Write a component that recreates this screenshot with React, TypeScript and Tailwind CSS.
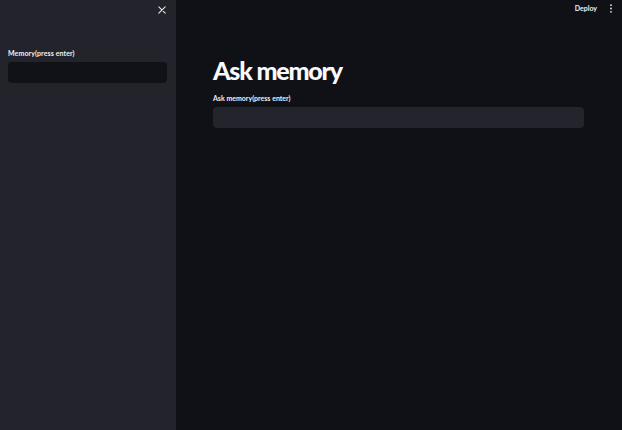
import React from "react";

export default function App() {
  return (
    <div className="flex h-[430px] w-[622px] overflow-hidden bg-[#0f1117] text-[#fafafa]" style={{ fontFamily: "Lato, 'Noto Sans', sans-serif" }}>
      <aside className="flex w-[176px] shrink-0 flex-col bg-[#22232b] px-[8px]">
        <div className="flex h-[14px] items-end justify-end pr-[1px]">
          <svg width="8" height="8" viewBox="0 0 10 10" className="mr-[1px]">
            <path d="M1 1 L9 9 M9 1 L1 9" stroke="#e6e6e6" strokeWidth="1.4" strokeLinecap="round" />
          </svg>
        </div>
        <label className="mt-[34px] text-[7px] font-bold leading-[10px] tracking-[0.1px] text-[#f0f0f0]">Memory(press enter)</label>
        <div className="mt-[4px] h-[21px] w-[159px] rounded-[4px] bg-[#111217]" />
      </aside>
      <main className="flex flex-1 flex-col">
        <div className="flex h-[17px] items-center justify-end gap-[12px] pr-[9px]">
          <span className="text-[7px] font-bold text-[#f0f0f0]">Deploy</span>
          <svg width="4" height="9" viewBox="0 0 4 9">
            <circle cx="2" cy="1.2" r="0.9" fill="#e6e6e6" />
            <circle cx="2" cy="4.5" r="0.9" fill="#e6e6e6" />
            <circle cx="2" cy="7.8" r="0.9" fill="#e6e6e6" />
          </svg>
        </div>
        <div className="flex flex-col pl-[37px] pr-[38px]">
          <h1 className="mt-[38px] text-[25px] font-black leading-[30px] tracking-[-1.2px] text-[#fafafa]">Ask memory</h1>
          <label className="mt-[8px] text-[7px] font-bold leading-[10px] text-[#f0f0f0]">Ask memory(press enter)</label>
          <div className="mt-[4px] h-[21px] w-[371px] rounded-[4px] bg-[#23242c]" />
        </div>
      </main>
    </div>
  );
}
